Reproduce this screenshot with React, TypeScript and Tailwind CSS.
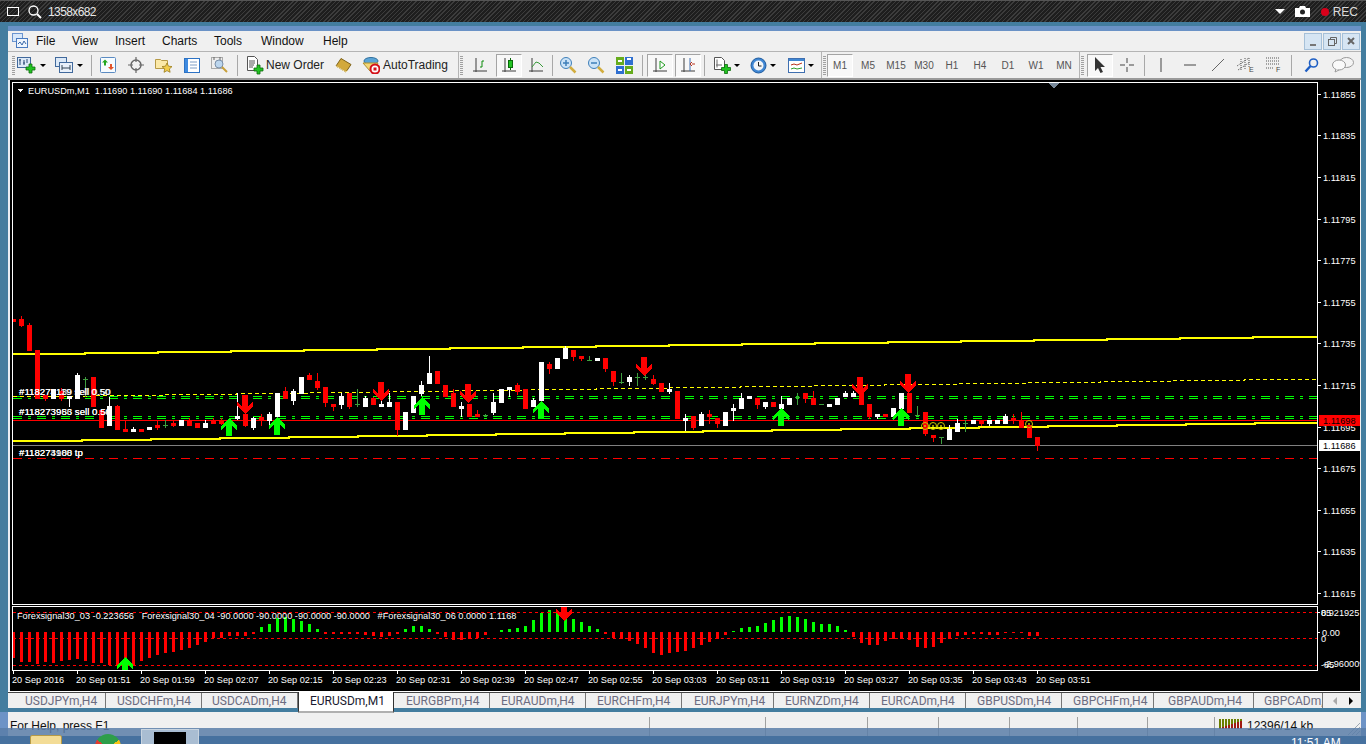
import React from 'react'

type Candle = [string, number, number, number, number]

// r = red, w = white, g = green doji: wick top, body top, body bottom, wick bottom
const candles: Candle[] = [
  ['r',319,319,322,322],['r',316,319,326,327],['r',323,325,351,351],['r',350,350,399,399],['r',395,395,399,401],
  ['w',389,389,399,399],['r',388,391,399,401],['w',396,396,399,407],['w',373,375,399,399],['g',377,379,379,397],
  ['r',377,377,407,407],['r',410,410,428,428],['w',397,406,426,426],['r',405,406,430,430],['r',421,429,432,432],
  ['w',427,429,432,432],['r',429,429,432,432],['w',427,427,430,430],['r',421,425,428,430],['g',420,425,425,428],
  ['r',421,423,426,427],['w',420,420,426,426],['r',418,420,426,426],['r',423,423,428,428],['w',420,423,428,428],
  ['r',418,421,424,424],['r',418,421,424,425],['w',420,420,424,424],['w',393,416,419,420],['r',414,414,426,427],
  ['w',417,418,428,430],['r',414,417,420,426],['w',412,414,421,428],['w',393,393,417,417],['r',387,391,399,399],
  ['w',389,391,401,405],['w',377,377,394,394],['r',373,375,380,380],['r',373,381,388,390],['r',387,387,403,407],
  ['r',404,404,407,411],['w',393,396,405,409],['r',393,393,407,409],['g',389,404,404,407],['w',396,398,407,407],
  ['r',397,398,405,405],['w',400,404,407,407],['w',393,402,407,407],['r',402,402,430,436],['w',412,412,430,430],
  ['w',396,396,413,413],['w',381,385,394,396],['w',356,373,384,384],['r',371,371,384,384],['r',385,385,397,397],
  ['r',389,393,407,407],['w',402,406,409,417],['r',404,404,417,417],['r',410,414,417,417],['g',414,415,415,417],
  ['w',393,402,413,415],['w',389,389,403,403],['w',387,387,390,397],['r',383,385,392,395],['r',389,389,409,409],
  ['w',398,400,407,407],['w',362,362,401,401],['r',362,364,369,374],['w',358,358,369,369],['w',346,348,359,359],
  ['r',350,350,357,361],['r',356,356,359,361],['g',356,360,360,361],['w',358,358,361,361],['r',358,358,369,372],
  ['r',371,371,382,386],['g',373,382,382,384],['w',375,377,382,386],['g',373,377,377,386],['g',373,377,377,380],
  ['r',375,379,384,385],['r',383,383,392,392],['w',383,389,392,394],['r',391,391,419,419],['w',414,418,421,431],
  ['r',416,416,428,430],['w',412,414,426,426],['r',410,414,417,424],['r',418,418,424,428],['w',412,412,426,426],
  ['w',404,408,411,421],['w',393,398,409,409],['w',396,396,399,399],['r',398,398,405,409],['w',402,402,407,409],
  ['r',402,402,407,407],['w',396,404,409,409],['w',398,398,405,405],['g',393,397,397,405],['r',393,393,399,403],
  ['r',391,398,405,405],['g',404,404,404,404],['w',404,404,407,407],['w',398,398,405,405],['w',391,393,397,397],
  ['w',391,393,397,397],['r',393,393,405,405],['r',404,404,417,419],['w',414,414,417,419],['r',414,414,417,417],
  ['w',408,408,417,417],['w',393,393,409,409],['r',393,393,413,413],['g',406,415,415,415],['r',412,412,434,436],
  ['r',435,435,438,442],['g',437,437,437,444],['w',425,429,440,440],['w',419,423,432,432],['g',420,423,423,432],
  ['w',420,420,424,424],['r',420,420,424,426],['w',420,420,424,426],['w',420,420,424,424],['w',414,416,424,424],
  ['r',414,418,421,424],['r',412,420,428,428],['r',425,425,438,438],['r',437,437,446,451],
]

// bottom (or top, above the 632 level) of every histogram bar in the sub window
const hist: number[] = [
  658,662,662,664,662,663,661,660,659,661,663,663,665,665,665,665,661,658,655,653,652,650,648,645,642,638,638,636,636,636,
  634,627,624,618,617,619,621,624,629,634,634,634,634,634,635,636,637,636,634,629,626,626,629,634,637,640,640,639,638,635,
  632,630,629,628,626,620,613,610,613,616,619,622,626,629,634,638,639,641,644,648,653,655,653,652,651,648,645,642,639,635,
  631,628,627,626,623,620,617,616,617,619,622,624,624,626,630,637,643,645,645,641,639,639,640,647,648,647,643,639,636,635,
  634,634,635,635,633,633,633,636,636,
]
const greenRanges = [[31,38],[49,52],[60,73],[90,104]]

const prices: [string, number][] = [
  ['1.11855',94],['1.11835',135],['1.11815',177],['1.11795',219],['1.11775',260],['1.11755',302],['1.11735',343],
  ['1.11715',385],['1.11695',427],['1.11675',468],['1.11655',510],['1.11635',551],['1.11615',593],
]
const times = ['01:51','01:59','02:07','02:15','02:23','02:31','02:39','02:47','02:55','03:03','03:11','03:19','03:27','03:35','03:43','03:51']

const upArrows = [[229,418],[277,417],[422,397],[541,401],[781,408],[901,408]]
const downArrows = [[245,414],[381,401],[468,403],[644,376],[860,396],[908,393]]

function stepped(y0: number, first: number, step: number, dir = -1) {
  let d = `M13 ${y0}`
  let y = y0
  for (let x = first; x < 1317; x += step) {
    d += ` L${x} ${y}`
    y += dir
    d += ` L${x} ${y}`
  }
  return d + ` L1317 ${y}`
}

const ArrowUp = ({ x, y, h = 18 }: { x: number; y: number; h?: number }) => (
  <path fill="#00ff00" d={`M${x} ${y} L${x + 8} ${y + 8} L${x + 8} ${y + 12} L${x + 3} ${y + 8} L${x + 3} ${y + h} L${x - 3} ${y + h} L${x - 3} ${y + 8} L${x - 8} ${y + 12} L${x - 8} ${y + 8} Z`} />
)
const ArrowDown = ({ x, y, h = 19 }: { x: number; y: number; h?: number }) => (
  <path fill="#ff0000" d={`M${x} ${y} L${x + 8} ${y - 8} L${x + 8} ${y - 12} L${x + 3} ${y - 8} L${x + 3} ${y - h} L${x - 3} ${y - h} L${x - 3} ${y - 8} L${x - 8} ${y - 12} L${x - 8} ${y - 8} Z`} />
)

function ChartCanvas() {
  const t = { fontFamily: '"Liberation Sans", Arial, sans-serif', fontSize: 9.2, fill: '#fff' }
  return (
    <svg viewBox="10 80 1350 611" width="1350" height="611" className="block" shapeRendering="crispEdges">
      <defs>
        <clipPath id="main"><rect x="13" y="83" width="1304" height="521" /></clipPath>
        <clipPath id="sub"><rect x="13" y="607" width="1304" height="63" /></clipPath>
      </defs>
      <rect x="12.500" y="82.500" width="1305" height="522" fill="none" stroke="#fff" />
      <rect x="12.500" y="606.500" width="1305" height="64" fill="none" stroke="#fff" />
      <path d="M1048 83 L1060 83 L1054 88 Z" fill="#778899" />

      <g clipPath="url(#main)">
        <line x1="13" x2="1317" y1="396.500" y2="396.500" stroke="#00ff00" strokeDasharray="9 6 3 6" />
        <line x1="13" x2="1317" y1="398.500" y2="398.500" stroke="#00ff00" strokeDasharray="9 6 3 6" />
        <line x1="13" x2="1317" y1="416.500" y2="416.500" stroke="#00ff00" strokeDasharray="9 6 3 6" />
        <line x1="13" x2="1317" y1="418.500" y2="418.500" stroke="#00ff00" strokeDasharray="9 6 3 6" />
        <line x1="13" x2="1317" y1="420.500" y2="420.500" stroke="#ff0000" />
        <line x1="13" x2="1317" y1="445.500" y2="445.500" stroke="#808080" />
        <line x1="13" x2="1317" y1="458.500" y2="458.500" stroke="#ff0000" strokeDasharray="9 6 3 6" />
        <path d={stepped(396.500, 92, 72)} fill="none" stroke="#ffff00" strokeDasharray="4 3" />
        <path d={stepped(354, 85, 73)} fill="none" stroke="#ffff00" strokeWidth="2" />
        <path d={stepped(441, 82, 69)} fill="none" stroke="#ffff00" strokeWidth="2" />

        {candles.map(([c, hi, top, bot, lo], k) => {
          const color = c === 'r' ? '#ff0000' : c === 'w' ? '#ffffff' : '#3f9f3f'
          return (
            <g key={k} fill={color}>
              <rect x={13 + 8 * k} y={hi} width="1" height={lo - hi || 1} />
              <rect x={11 + 8 * k} y={top} width="5" height={bot - top || 1} />
            </g>
          )
        })}

        {[925, 933, 941, 1029].map((x, i) => (
          <g key={x}>
            <circle cx={x} cy={i === 3 ? 424 : 426} r="3.500" fill="none" stroke="#c8c800" shapeRendering="auto" />
            <circle cx={x} cy={i === 3 ? 424 : 426} r="1" fill="#c8c800" shapeRendering="auto" />
          </g>
        ))}
        {upArrows.map(([x, y]) => <ArrowUp key={x} x={x} y={y} />)}
        {downArrows.map(([x, y]) => <ArrowDown key={x} x={x} y={y} />)}

        <text x="19" y="395" {...t} fontSize={9.7}>#118274139 sell 0.50</text>
        <text x="19" y="395" {...t} fontSize={9.7}>#118273119 sell 0.50</text>
        <text x="19" y="415" {...t} fontSize={9.7}>#118273983 sell 0.50</text>
        <text x="19" y="415" {...t} fontSize={9.7}>#118273956 sell 0.50</text>
        <text x="19" y="456" {...t} fontSize={9.7}>#118274988 tp</text>
        <text x="19" y="456" {...t} fontSize={9.7}>#118273100 tp</text>
      </g>

      <path d="M17 89 L23 89 L20 92 Z" fill="#fff" />
      <text x="28" y="94" {...t} className="whitespace-pre">EURUSDm,M1  1.11690 1.11690 1.11684 1.11686</text>

      {prices.map(([p, y]) => (
        <g key={p}>
          <rect x="1318" y={y} width="3" height="1" fill="#fff" />
          <text x="1323" y={y + 4} {...t}>{p}</text>
        </g>
      ))}
      <rect x="1319" y="415" width="41" height="11" fill="#ff0000" />
      <text x="1323" y="424" {...t} fill="#000">1.11698</text>
      <rect x="1319" y="440" width="41" height="11" fill="#ffffff" />
      <text x="1323" y="449" {...t} fill="#000">1.11686</text>

      <g clipPath="url(#sub)">
        {hist.map((b, k) => {
          const green = greenRanges.some(([a, z]) => k >= a && k <= z)
          const top = Math.min(b, 632)
          const bot = Math.max(b, 632)
          return <rect key={k} x={12 + 8 * k} y={top} width="3" height={bot - top} fill={green ? '#00ff00' : '#ff0000'} />
        })}
        <line x1="13" x2="1317" y1="612.500" y2="612.500" stroke="#ff0000" strokeDasharray="3 3" />
        <line x1="13" x2="1317" y1="638.500" y2="638.500" stroke="#ff0000" strokeDasharray="3 3" />
        <line x1="13" x2="1317" y1="665.500" y2="665.500" stroke="#ff0000" strokeDasharray="3 3" />
        <ArrowUp x={125} y={657} h={14} />
        <ArrowDown x={564} y={621} h={14} />
      </g>
      <text x="17" y="619" {...t} className="whitespace-pre">Forexsignal30_03 -0.223656   Forexsignal30_04 -90.0000 -90.0000 -90.0000 -90.0000   #Forexsignal30_06 0.0000 1.1168</text>

      <text x="1321" y="616" {...t}>85</text>
      <text x="1321" y="616" {...t}>0.921925</text>
      <text x="1322" y="636" {...t}>0.00</text>
      <text x="1321" y="642" {...t}>0</text>
      <text x="1321" y="668" {...t}>-85</text>
      <text x="1323" y="667" {...t}>-2.960009</text>
      <rect x="1318" y="612" width="2" height="1" fill="#fff" />
      <rect x="1318" y="632" width="2" height="1" fill="#fff" />

      <rect x="13" y="671" width="1" height="3" fill="#fff" />
      <text x="12" y="683" {...t}>20 Sep 2016</text>
      {times.map((tm, i) => (
        <g key={tm}>
          <rect x={77 + 64 * i} y="671" width="1" height="3" fill="#fff" />
          <text x={76 + 64 * i} y="683" {...t}>20 Sep {tm}</text>
        </g>
      ))}
    </svg>
  )
}

/* toolbar bits */
const Caret = ({ className }: { className: string }) => (
  <div className={`${className} flex items-center justify-center`}>
    <div className="h-0 w-0 border-x-[3px] border-t-[3px] border-x-transparent border-t-black" />
  </div>
)
const Sep = ({ className }: { className: string }) => (
  <div className={`${className} flex items-center justify-center`}>
    <div className="h-[21px] w-px bg-[#a8a8a8]" />
  </div>
)
const Gripper = ({ className }: { className: string }) => (
  <div className={`${className} flex items-center justify-center`}>
    <div className="h-[19px] w-[3px] bg-[repeating-linear-gradient(180deg,#a0a0a0_0,#a0a0a0_1px,transparent_1px,transparent_2px)]" />
  </div>
)
const Cell = ({ className, pressed, children }: { className: string; pressed?: boolean; children: React.ReactNode }) => (
  <div className={`${className} flex h-[23px] items-center justify-center ${pressed ? 'border border-t-[#a4a4a4] border-l-[#a4a4a4] border-r-white border-b-white bg-[#f8f8f8]' : ''}`}>
    {children}
  </div>
)

const GreenPlus = ({ x, y }: { x: number; y: number }) => (
  <path transform={`translate(${x} ${y})`} d="M3 0h3v3h3v3H6v3H3V6H0V3h3z" fill="#22c322" stroke="#0c6b0c" strokeWidth="0.8" />
)
const NewChartIcon = () => (
  <svg width="20" height="18" viewBox="0 0 20 18">
    <rect x="0.500" y="1.500" width="13" height="10" fill="#dce9f7" stroke="#41699c" />
    <path d="M3 3v6M2 4h2M7 4v5M6 7h2M10 3v4" stroke="#2b4a75" fill="none" />
    <GreenPlus x={9} y={8} />
  </svg>
)
const ProfilesIcon = () => (
  <svg width="18" height="18" viewBox="0 0 18 18">
    <rect x="0.500" y="1.500" width="11" height="9" fill="#dce9f7" stroke="#41699c" />
    <rect x="4.500" y="6.500" width="13" height="10" fill="#e8f0fa" stroke="#41699c" />
    <path d="M7 12h8M7 9v5M15 9v5" stroke="#345" fill="none" />
  </svg>
)
const MarketIcon = () => (
  <svg width="16" height="16" viewBox="0 0 16 16">
    <rect x="0.500" y="0.500" width="15" height="15" rx="1" fill="#f6fbff" stroke="#5b8bc2" />
    <path d="M5 2.500l3 3H6v3H4v-3H2z" fill="#22a722" />
    <path d="M11 13l-3-3h2V7h2v3h2z" fill="#e2542a" />
  </svg>
)
const TargetIcon = () => (
  <svg width="16" height="16" viewBox="0 0 16 16" fill="none" stroke="#666">
    <circle cx="8" cy="8" r="5" strokeWidth="1.400" />
    <path d="M8 0v5M8 11v5M0 8h5M11 8h5" strokeWidth="1.200" />
  </svg>
)
const FolderStarIcon = () => (
  <svg width="18" height="18" viewBox="0 0 18 18">
    <path d="M0.500 3.500h5l1 1h6v8h-12z" fill="#fbe9a8" stroke="#b69a47" />
    <path d="M12 7l1.500 3.200 3.500.4-2.600 2.300.7 3.400-3.100-1.700-3 1.700.7-3.400L7 10.600l3.500-.4z" fill="#f2cd4b" stroke="#9a7c1c" strokeWidth="0.800" />
  </svg>
)
const NavigatorIcon = () => (
  <svg width="16" height="15" viewBox="0 0 16 15">
    <rect x="0.500" y="0.500" width="15" height="14" fill="#fff" stroke="#2c72c4" />
    <rect x="1" y="1" width="3" height="13" fill="#3f8be0" />
    <path d="M6 4h7M6 7h7M6 10h7" stroke="#7c9cc4" />
  </svg>
)
const TesterIcon = () => (
  <svg width="18" height="18" viewBox="0 0 18 18">
    <rect x="0.500" y="1.500" width="11" height="11" fill="#eee" stroke="#aaa" />
    <path d="M3 1v3M9 1v3" stroke="#666" />
    <circle cx="8" cy="8" r="4" fill="#bcd6ee" stroke="#7a8fa8" />
    <path d="M11 11l5 5" stroke="#c8a03a" strokeWidth="2" />
  </svg>
)
const NewOrderIcon = () => (
  <svg width="17" height="19" viewBox="0 0 17 19">
    <path d="M0.500 0.500h7l3 3v11h-10z" fill="#fff" stroke="#555" />
    <path d="M2 5h6M2 7h6M2 9h5M2 11h4" stroke="#555" fill="none" />
    <GreenPlus x={7} y={9} />
  </svg>
)
const BookIcon = () => (
  <svg width="17" height="15" viewBox="0 0 17 15">
    <path d="M6 0.500l10 6-5 7.500L1 8z" fill="#d2a93c" stroke="#7d6118" />
    <path d="M1 8l10 6 1.500-1.500" fill="none" stroke="#f1dc97" />
  </svg>
)
const AutoTradingIcon = () => (
  <svg width="18" height="18" viewBox="0 0 18 18">
    <ellipse cx="9" cy="5" rx="7" ry="3.500" fill="#5aa4d6" stroke="#2f6f9d" />
    <path d="M1 7l7 8 5-2 3-6z" fill="#f3d777" stroke="#ad8f2f" />
    <circle cx="13" cy="13" r="4.500" fill="#fff" stroke="#d4121a" strokeWidth="2" />
    <rect x="11.500" y="11.500" width="3" height="3" fill="#d4121a" />
  </svg>
)
const Axes = () => <path d="M5 2v14M2 15h14" stroke="#3c3c3c" fill="none" />
const BarIcon = () => (
  <svg width="18" height="18" viewBox="0 0 18 18"><Axes /><path d="M9 11h2V5h2" stroke="#0a8a0a" fill="none" /></svg>
)
const CandleIcon = () => (
  <svg width="18" height="18" viewBox="0 0 18 18"><Axes /><rect x="8.500" y="4.500" width="4" height="7" fill="#22c322" stroke="#0a6a0a" /><path d="M10.500 2v2M10.500 12v2" stroke="#0a6a0a" /></svg>
)
const LineIcon = () => (
  <svg width="18" height="18" viewBox="0 0 18 18"><Axes /><path d="M5 11l4-5 3 1 4 4" stroke="#3a9a3a" fill="none" /></svg>
)
const ZoomIcon = ({ minus }: { minus?: boolean }) => (
  <svg width="18" height="18" viewBox="0 0 18 18">
    <circle cx="7" cy="7" r="5.500" fill="#cbe3f7" stroke="#3e7fb9" />
    <path d={minus ? 'M4 7h6' : 'M4 7h6M7 4v6'} stroke="#3e7fb9" strokeWidth="1.500" />
    <path d="M11 11l5.500 5.500" stroke="#d2ad3f" strokeWidth="2.500" />
  </svg>
)
const TileIcon = () => (
  <svg width="17" height="17" viewBox="0 0 17 17">
    <rect width="8" height="8" fill="#66ac1d" /><rect x="9" width="8" height="8" fill="#2f6fd0" />
    <rect y="9" width="8" height="8" fill="#2f6fd0" /><rect x="9" y="9" width="8" height="8" fill="#66ac1d" />
    <path d="M2 4h4M11 2h4M2 13h4M11 13h4" stroke="#fff" strokeWidth="2" />
  </svg>
)
const AutoScrollIcon = () => (
  <svg width="18" height="18" viewBox="0 0 18 18"><Axes /><path d="M9 5l5 4-5 4z" fill="#fff" stroke="#1e9a1e" /></svg>
)
const ShiftIcon = () => (
  <svg width="18" height="18" viewBox="0 0 18 18"><Axes /><path d="M11 2v13" stroke="#3f6fb0" /><path d="M16 8h-3M13 6l-2 2 2 2" stroke="#b8301a" fill="none" /></svg>
)
const AddIndicatorIcon = () => (
  <svg width="18" height="19" viewBox="0 0 18 19">
    <path d="M0.500 1.500h7l3 3v9h-10z" fill="#fff" stroke="#555" />
    <path d="M3 3.500v8M2 9h6" stroke="#666" />
    <GreenPlus x={7.500} y={8.500} />
  </svg>
)
const ClockIcon = () => (
  <svg width="17" height="17" viewBox="0 0 17 17">
    <circle cx="8.500" cy="8.500" r="7.500" fill="#3f86d3" stroke="#1f5c9f" />
    <circle cx="8.500" cy="8.500" r="5" fill="#f2f5f8" />
    <path d="M8.500 5v4h3" stroke="#222" fill="none" />
  </svg>
)
const TemplateIcon = () => (
  <svg width="17" height="15" viewBox="0 0 17 15">
    <rect x="0.500" y="0.500" width="16" height="14" fill="#fff" stroke="#3f6fb0" />
    <rect x="1" y="1" width="15" height="2" fill="#3f86d3" />
    <path d="M3 7l3-1 3 1 5-2" stroke="#b8301a" fill="none" />
    <path d="M3 11l3-1 3 1 5-1" stroke="#2d9a2d" fill="none" />
  </svg>
)
const CursorIcon = () => (
  <svg width="12" height="16" viewBox="0 0 12 16"><path d="M1 0v14l3-3 2.500 5 2.500-1-2.500-5H11z" fill="#333" /></svg>
)
const CrossIcon = () => (
  <svg width="16" height="16" viewBox="0 0 16 16"><path d="M8 1v5M8 10v5M1 8h5M10 8h5" stroke="#444" fill="none" /></svg>
)
const VLineIcon = () => <svg width="4" height="14" viewBox="0 0 4 14"><path d="M2 0v14" stroke="#444" /></svg>
const HLineIcon = () => <svg width="12" height="4" viewBox="0 0 12 4"><path d="M0 2h12" stroke="#444" /></svg>
const TrendIcon = () => <svg width="14" height="14" viewBox="0 0 14 14"><path d="M1 13L13 1" stroke="#666" /></svg>
const ChannelIcon = () => (
  <svg width="18" height="17" viewBox="0 0 18 17">
    <path d="M0 9L12 1M1 13L13 5M4 2v12M8 1v12M12 1v10" stroke="#555" fill="none" strokeDasharray="1 1" />
    <text x="12" y="15" fontSize="7" fontFamily='"Liberation Sans", sans-serif' fill="#444">E</text>
  </svg>
)
const FiboIcon = () => (
  <svg width="16" height="17" viewBox="0 0 16 17">
    <path d="M0 1h13M0 4h13M0 7h13M0 11h8" stroke="#555" strokeDasharray="1 1" fill="none" />
    <text x="10" y="15" fontSize="7" fontFamily='"Liberation Sans", sans-serif' fill="#444">F</text>
  </svg>
)
const SearchIcon = () => (
  <svg width="15" height="15" viewBox="0 0 15 15" fill="none" stroke="#1f5fc4">
    <circle cx="9.500" cy="5" r="4" strokeWidth="1.600" />
    <path d="M6.500 8L1.500 13.500" strokeWidth="2.400" />
  </svg>
)
const ChatIcon = () => (
  <svg width="22" height="16" viewBox="0 0 22 16">
    <ellipse cx="14.500" cy="5.500" rx="7" ry="5" fill="#f4f4f4" stroke="#999" />
    <ellipse cx="7" cy="8" rx="6.500" ry="5" fill="#fafafa" stroke="#999" />
    <path d="M4 12l-1 3 4-2" fill="#fafafa" stroke="#999" />
  </svg>
)
const AppIcon = () => (
  <svg width="16" height="16" viewBox="0 0 16 16">
    <rect x="0.500" y="0.500" width="10" height="8" fill="#d8e8fa" stroke="#6b95d0" />
    <rect x="4.500" y="5.500" width="11" height="9" fill="#eef5fd" stroke="#4a7bc0" />
    <path d="M6 11l2-2 2 3 2-4 2 3" stroke="#3a68a8" fill="none" />
  </svg>
)

const menus = [
  { label: 'File', cls: 'w-[36px]' },
  { label: 'View', cls: 'w-[43px]' },
  { label: 'Insert', cls: 'w-[47px]' },
  { label: 'Charts', cls: 'w-[52px]' },
  { label: 'Tools', cls: 'w-[47px]' },
  { label: 'Window', cls: 'w-[62px]' },
  { label: 'Help', cls: 'w-[40px]' },
]

const periods = ['M5', 'M15', 'M30', 'H1', 'H4', 'D1', 'W1', 'MN']

const tabs = [
  { label: 'USDJPYm,H4', cls: 'w-[98px] pl-[17px]' },
  { label: 'USDCHFm,H4', cls: 'w-[96px] pl-[11px]' },
  { label: 'USDCADm,H4', cls: 'w-[96px] pl-[10px]' },
  { label: 'EURUSDm,M1', cls: 'w-[96px] pl-[11px]', active: true },
  { label: 'EURGBPm,H4', cls: 'w-[96px] pl-[12px]' },
  { label: 'EURAUDm,H4', cls: 'w-[96px] pl-[11px]' },
  { label: 'EURCHFm,H4', cls: 'w-[96px] pl-[11px]' },
  { label: 'EURJPYm,H4', cls: 'w-[92px] pl-[12px]' },
  { label: 'EURNZDm,H4', cls: 'w-[96px] pl-[11px]' },
  { label: 'EURCADm,H4', cls: 'w-[96px] pl-[11px]' },
  { label: 'GBPUSDm,H4', cls: 'w-[96px] pl-[11px]' },
  { label: 'GBPCHFm,H4', cls: 'w-[92px] pl-[11px]' },
  { label: 'GBPAUDm,H4', cls: 'w-[100px] pl-[14px]' },
  { label: 'GBPCADm,H4', cls: 'w-[69px] pl-[10px]' },
]

const statusSeps = ['w-[116px]', 'w-[102px]', 'w-[71px]', 'w-[71px]', 'w-[68px]', 'w-[70px]', 'w-[67px]']

export default function App() {
  return (
    <div className="relative h-[744px] w-[1370px] overflow-hidden bg-white font-['Liberation_Sans',Arial,sans-serif]">
      <div className="flex h-[744px] w-[1366px] flex-col bg-[#437d9f]">
        {/* recorder bar */}
        <div className="flex h-[22px] shrink-0 items-center border-t border-[#555] bg-[repeating-linear-gradient(135deg,#3c3c3c_0,#3c3c3c_1px,#1e1e1e_1px,#1e1e1e_3px)] text-white">
          <div className="ml-[7px] h-[9px] w-[12px] border border-white" />
          <svg width="14" height="14" viewBox="0 0 14 14" className="ml-[9px]" fill="none" stroke="#fff">
            <circle cx="5.500" cy="5.500" r="4.500" strokeWidth="1.300" />
            <path d="M9 9l4 4" strokeWidth="2" />
          </svg>
          <span className="ml-[6px] text-[12px] tracking-[-0.6px] text-[#e8e8e8]">1358x682</span>
          <div className="ml-auto mr-[8px] flex items-center">
            <div className="h-0 w-0 border-x-[5px] border-t-[5px] border-x-transparent border-t-white" />
            <svg width="15" height="11" viewBox="0 0 15 11" className="ml-[10px]">
              <path d="M0 2h4l1-2h5l1 2h4v9H0z" fill="#fff" />
              <circle cx="7.500" cy="6" r="2.500" fill="#222" />
            </svg>
            <div className="ml-[11px] h-[8px] w-[8px] rounded-full bg-[#d8001a]" />
            <span className="ml-[4px] text-[12px] text-[#dcdcdc]">REC</span>
          </div>
        </div>

        <div className="mt-[4px] flex min-h-0 flex-1">
          <div className="w-[8px] shrink-0" />
          <div className="flex w-[1353px] flex-col">
            <div className="h-[5px] shrink-0 bg-[#6a92c6]" />
            {/* menu */}
            <div className="flex h-[20px] shrink-0 items-center bg-[#f0f0f0] pl-[4px] text-[12px] text-[#111]">
              <AppIcon />
              <div className="ml-[8px] flex">
                {menus.map((m) => <div key={m.label} className={m.cls}>{m.label}</div>)}
              </div>
              <div className="ml-auto flex gap-px pr-px">
                <div className="flex h-[17px] w-[18px] items-end justify-center border border-[#a6c0d8] bg-[#d6e5f3] pb-[3px]"><div className="h-[2px] w-[6px] bg-[#777]" /></div>
                <div className="flex h-[17px] w-[18px] items-center justify-center border border-[#a6c0d8] bg-[#d6e5f3]">
                  <svg width="9" height="9" viewBox="0 0 9 9" fill="none" stroke="#666"><rect x="0.500" y="2.500" width="6" height="6" /><path d="M2.500 2V0.500h6v6H7" /></svg>
                </div>
                <div className="flex h-[17px] w-[18px] items-center justify-center border border-[#a6c0d8] bg-[#d6e5f3]">
                  <svg width="8" height="8" viewBox="0 0 8 8" stroke="#666" strokeWidth="2"><path d="M1 1l6 6M7 1l-6 6" /></svg>
                </div>
              </div>
            </div>
            {/* toolbar */}
            <div className="flex h-[27px] shrink-0 items-center border-t border-[#b4b4b4] bg-[#f0f0f0] pl-[2px] text-[12px] text-[#222]">
              <Gripper className="w-[6px]" />
              <Cell className="w-[22px]"><NewChartIcon /></Cell>
              <Caret className="w-[10px]" />
              <div className="w-[6px]" />
              <Cell className="w-[20px]"><ProfilesIcon /></Cell>
              <Caret className="w-[12px]" />
              <Sep className="w-[10px]" />
              <Cell className="w-[24px]"><MarketIcon /></Cell>
              <Cell className="w-[32px]"><TargetIcon /></Cell>
              <Cell className="w-[24px]"><FolderStarIcon /></Cell>
              <Cell className="w-[32px]"><NavigatorIcon /></Cell>
              <Cell className="w-[24px]"><TesterIcon /></Cell>
              <Sep className="w-[10px]" />
              <Cell className="w-[88px] !justify-start pl-[5px]"><NewOrderIcon /><span className="ml-[2px]">New Order</span></Cell>
              <Cell className="w-[26px]"><BookIcon /></Cell>
              <Cell className="w-[98px] !justify-start pl-[6px]"><AutoTradingIcon /><span className="ml-[3px]">AutoTrading</span></Cell>
              <div className="h-full w-[5px] border-r border-[#b4b4b4]" />
              <Gripper className="w-[5px]" />
              <Cell className="w-[32px]"><BarIcon /></Cell>
              <Cell className="w-[26px]" pressed><CandleIcon /></Cell>
              <Cell className="w-[28px]"><LineIcon /></Cell>
              <Sep className="w-[4px]" />
              <Cell className="w-[28px]"><ZoomIcon /></Cell>
              <Cell className="w-[28px]"><ZoomIcon minus /></Cell>
              <Cell className="w-[28px]"><TileIcon /></Cell>
              <Sep className="w-[8px]" />
              <Cell className="w-[26px] mx-px" pressed><AutoScrollIcon /></Cell>
              <Cell className="w-[26px] mx-px" pressed><ShiftIcon /></Cell>
              <Sep className="w-[4px]" />
              <div className="w-[6px]" />
              <Cell className="w-[22px]"><AddIndicatorIcon /></Cell>
              <Caret className="w-[5px]" />
              <div className="w-[7px]" />
              <Cell className="w-[24px]"><ClockIcon /></Cell>
              <Caret className="w-[6px]" />
              <div className="w-[8px]" />
              <Cell className="w-[24px]"><TemplateIcon /></Cell>
              <Caret className="w-[6px]" />
              <div className="h-full w-[8px] border-r border-[#b4b4b4]" />
              <Gripper className="w-[4px]" />
              <div className="w-[1px]" />
              <Cell className="w-[26px] mr-px text-[10px] text-[#555]" pressed>M1</Cell>
              {periods.map((p) => (
                <Cell key={p} className="w-[28px] text-[10px] text-[#555]">{p}</Cell>
              ))}
              <div className="h-full w-[2px] border-r border-[#b4b4b4]" />
              <Gripper className="w-[4px]" />
              <div className="w-[3px]" />
              <Cell className="w-[26px]" pressed><CursorIcon /></Cell>
              <Cell className="w-[28px]"><CrossIcon /></Cell>
              <Sep className="w-[6px]" />
              <Cell className="w-[28px]"><VLineIcon /></Cell>
              <Cell className="w-[29px]"><HLineIcon /></Cell>
              <Cell className="w-[28px]"><TrendIcon /></Cell>
              <Cell className="w-[28px]"><ChannelIcon /></Cell>
              <Cell className="w-[28px]"><FiboIcon /></Cell>
              <Sep className="w-[6px]" />
              <Cell className="w-[34px]"><SearchIcon /></Cell>
              <Cell className="w-[30px]"><ChatIcon /></Cell>
            </div>
            {/* chart */}
            <div className="h-[2px] shrink-0 bg-[#9a9a9a]" />
            <div className="flex h-[611px] shrink-0 border-r border-[#f0f0f0] bg-black">
              <div className="w-[2px] shrink-0 bg-[#e8eef4]" />
              <ChartCanvas />
            </div>
            <div className="h-px shrink-0 bg-white" />
            {/* symbol tabs */}
            <div className="flex h-[16px] shrink-0 items-start border-t border-[#444] bg-[#f0f0f0] font-['Roboto',sans-serif] text-[12px] leading-[16px] text-[#6c6c80]">
              {tabs.map((t) => t.active ? (
                <div key={t.label} className={`${t.cls} relative z-10 -mt-px h-[21px] shrink-0 border-x border-[#333] border-b-2 border-b-[#b0b0b0] bg-white pt-px text-[#1a1a30]`}>{t.label}</div>
              ) : (
                <div key={t.label} className={`${t.cls} h-[15px] shrink-0 overflow-hidden whitespace-nowrap border-r border-[#777]`}>{t.label}</div>
              ))}
              <div className="flex h-[15px] flex-1 items-center justify-end gap-[12px] pr-[8px]">
                <div className="h-0 w-0 border-y-[4px] border-r-[4px] border-y-transparent border-r-[#aaa]" />
                <div className="h-0 w-0 border-y-[4px] border-l-[4px] border-y-transparent border-l-black" />
              </div>
            </div>
          </div>
          <div className="flex-1" />
        </div>

        <div className="h-[4px] shrink-0" />
        {/* status bar */}
        <div className="flex h-[32px] shrink-0 bg-[#6d93c6]">
          <div className="w-[8px] shrink-0" />
          <div className="flex w-[1353px] items-start bg-[#f0f0f0] pt-[5px] text-[12px] text-[#111]">
            <div className="ml-[2px] w-[639px] shrink-0">For Help, press F1</div>
            {statusSeps.map((s, i) => <div key={i} className={`${s} h-[19px] shrink-0 border-l border-[#a0a0a0]`} />)}
            <div className="flex h-[19px] items-start border-l border-[#a0a0a0] pl-[4px] pt-[2px]">
              <svg width="24" height="10" viewBox="0 0 24 10">
                {[0, 3, 6, 9, 12, 15, 18, 21].map((x, i) => (
                  <g key={x}>
                    <rect x={x} y="0" width="2" height="10" fill="#6b7f00" />
                    <rect x={x} y={9 - i} width="2" height={i + 1} fill="#a01a10" />
                  </g>
                ))}
              </svg>
              <span className="ml-[4px] -mt-[2px]">12396/14 kb</span>
            </div>
            <svg width="14" height="14" viewBox="0 0 14 14" className="ml-auto mt-[5px]" stroke="#9aa6b2">
              <path d="M13 1L1 13M13 5L5 13M13 9l-4 4" />
            </svg>
          </div>
        </div>
      </div>

      {/* taskbar lies over the status bar */}
      <div className="absolute bottom-0 left-0 h-[16px] w-[1366px] overflow-hidden">
        <div className="h-[8px] bg-[#5a7ea8]/85" />
        <div className="h-[8px] bg-[#46719f]" />
        <div className="absolute left-[30px] top-[7px] h-[12px] w-[32px] rounded-t-[2px] border border-[#b69a47] bg-[#f3dc96]" />
        <div className="absolute left-[95px] top-[6px] h-[26px] w-[26px] rounded-full bg-[conic-gradient(#2e9e4a_0_16%,#f6c315_16%_50%,#e33b2e_50%_84%,#2e9e4a_84%_100%)]" />
        <div className="absolute left-[141px] top-px h-[16px] w-[58px] border border-[#c8d4e0] bg-[#a9bdd2]">
          <div className="ml-[12px] mt-[2px] h-[14px] w-[32px] bg-black" />
        </div>
        <div className="absolute left-[1291px] top-[6px] text-[12px] text-white">11:51 AM</div>
      </div>
    </div>
  )
}
